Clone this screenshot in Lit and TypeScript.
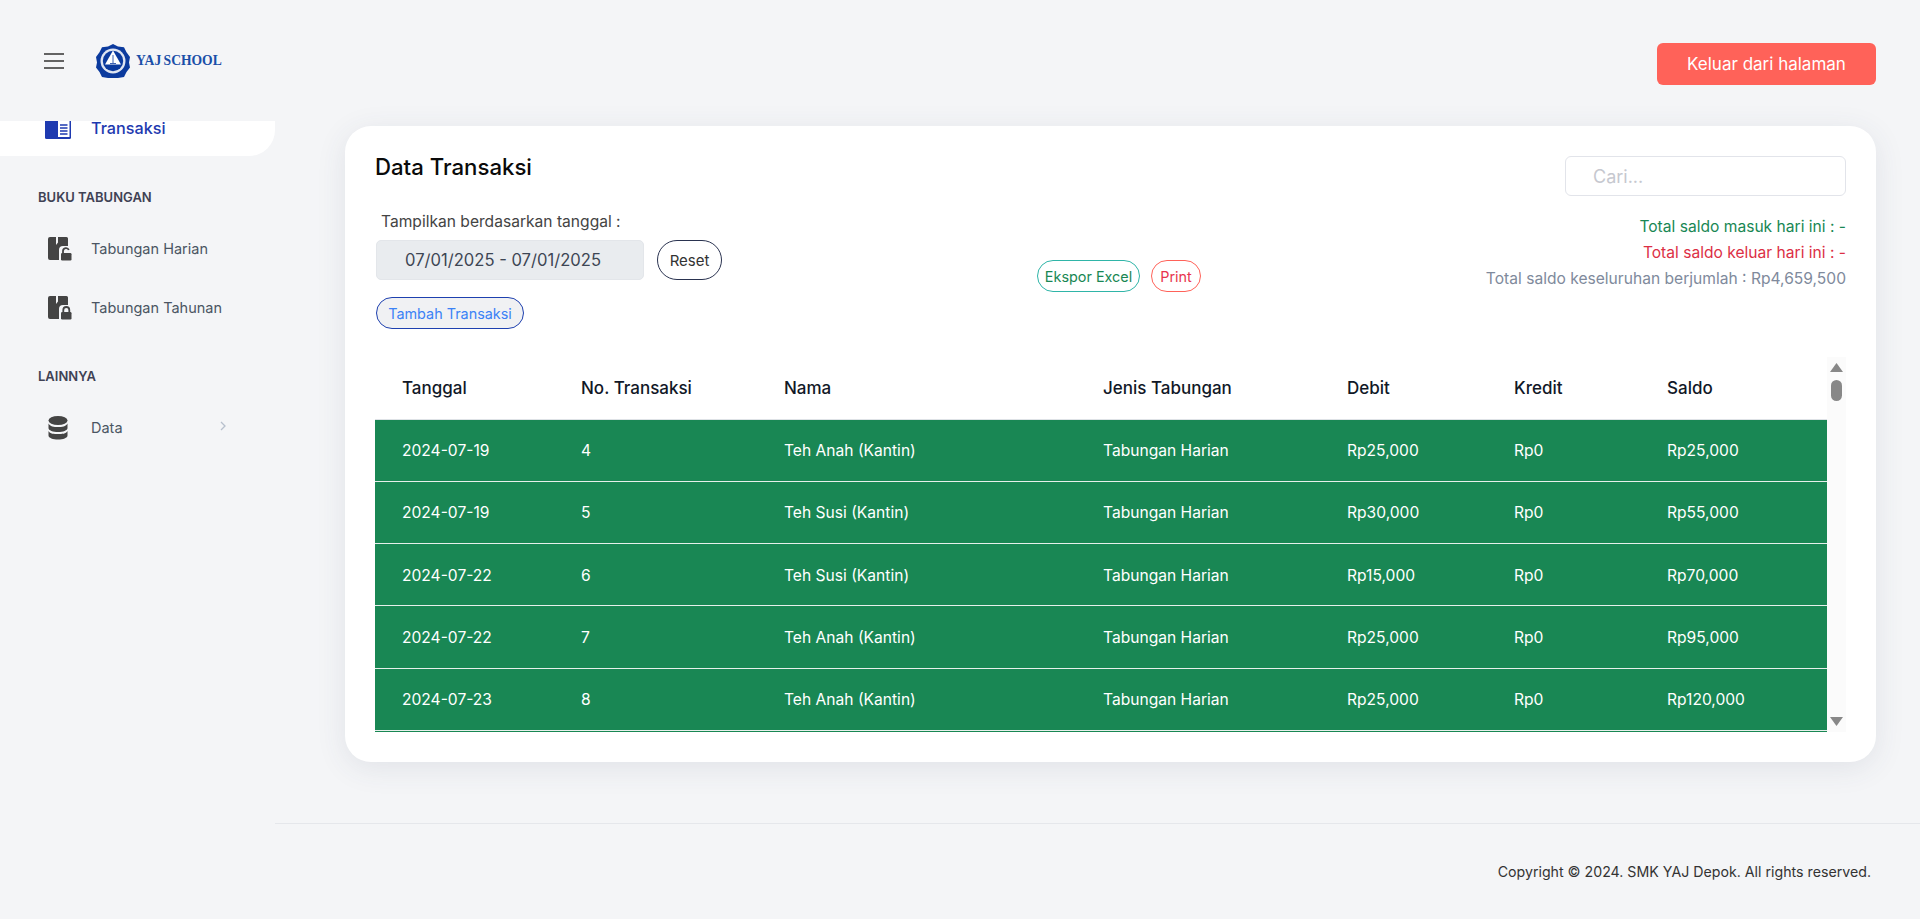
import { LitElement, css, html, svg } from 'lit'
import { customElement, state } from 'lit/decorators.js'

type Row = { date: string; no: string; name: string; debit: string; saldo: string }

const rows: Row[] = [
  { date: '2024-07-19', no: '4', name: 'Teh Anah (Kantin)', debit: 'Rp25,000', saldo: 'Rp25,000' },
  { date: '2024-07-19', no: '5', name: 'Teh Susi (Kantin)', debit: 'Rp30,000', saldo: 'Rp55,000' },
  { date: '2024-07-22', no: '6', name: 'Teh Susi (Kantin)', debit: 'Rp15,000', saldo: 'Rp70,000' },
  { date: '2024-07-22', no: '7', name: 'Teh Anah (Kantin)', debit: 'Rp25,000', saldo: 'Rp95,000' },
  { date: '2024-07-23', no: '8', name: 'Teh Anah (Kantin)', debit: 'Rp25,000', saldo: 'Rp120,000' },
]

const bookShape = svg`<path d="M2 0H8V8L10 5.500V0H18.500A1.500 1.500 0 0 1 20 1.500V9H15A4 4 0 0 0 11 13V23H2A2 2 0 0 1 0 21V2A2 2 0 0 1 2 0Z" fill="#444"/>`

const lockOpen = html`<svg class="ico" viewBox="0 0 24 24">
  ${bookShape}
  <path d="M15 16.500v-2.500a3 3 0 0 1 5.800-1" fill="none" stroke="#444" stroke-width="1.800"/>
  <rect x="13" y="16" width="10.500" height="7.500" rx="1.200" fill="#444"/>
</svg>`

const lockClosed = html`<svg class="ico" viewBox="0 0 24 24">
  ${bookShape}
  <path d="M15.300 16.500v-2.500a3 3 0 0 1 6 0v2.500" fill="none" stroke="#444" stroke-width="1.800"/>
  <rect x="13" y="16" width="10.500" height="7.500" rx="1.200" fill="#444"/>
</svg>`

@customElement('app-root')
export class AppRoot extends LitElement {
  @state()
  keyword = ''

  render() {
    return html`
      <header class="top">
        <div class="brand">
          <svg class="burger" viewBox="0 0 20 16">
            <path d="M0 1h20M0 8h20M0 15h20" stroke="#333" stroke-width="1.600"/>
          </svg>
          <svg class="seal" viewBox="0 0 34 34">
            <path d="M17 0l5 2.500 6 .8 2.500 5 3.500 4.700-1 5.500 1 5-3.500 4.500-2.500 5-6 1-5 2.500-5-2.500-6-1-2.500-5L0 23.500l1-5-1-5.500 3.500-4.700L6 3.300l6-.8z" fill="#0b3a9e"/>
            <circle cx="17" cy="17" r="12.500" fill="#dfe5f2"/>
            <circle cx="17" cy="17" r="10.200" fill="#0b3a9e"/>
            <path d="M17 6.500l8 14h-16z" fill="#fff"/>
            <path d="M17 11v8M14 19.500h6" stroke="#0b3a9e" stroke-width=".8"/>
          </svg>
          <span class="wordmark">YAJ SCHOOL</span>
        </div>
        <button class="logout">Keluar dari halaman</button>
      </header>

      <aside class="side">
        <a class="item active">
          <svg class="ico book" viewBox="0 6 26 18">
            <rect width="26" height="24" rx="1.500" fill="#1e3ab0"/>
            <rect x="13" y="2" width="11.500" height="20" fill="#fff"/>
            <path d="M15 10h7.500M15 13h7.500M15 16h7.500M15 19h7.500" stroke="#1e3ab0" stroke-width="1.400"/>
          </svg>
          <span>Transaksi</span>
        </a>
        <h6>BUKU TABUNGAN</h6>
        <a class="item">${lockOpen}<span>Tabungan Harian</span></a>
        <a class="item">${lockClosed}<span>Tabungan Tahunan</span></a>
        <h6 class="second">LAINNYA</h6>
        <a class="item">
          <svg class="ico" viewBox="0 0 24 24">
            <ellipse cx="10" cy="4.500" rx="9.500" ry="4.500" fill="#444"/>
            <path d="M.5 7.500C2 10.500 6 11 10 11s8-.5 9.500-3.500V12c0 2.500-4.500 4-9.500 4S.5 14.500.5 12z" fill="#444"/>
            <path d="M.5 15C2 18 6 18 10 18s8 0 9.500-3v4.500c0 2.500-4.500 4-9.500 4s-9.500-1.500-9.500-4z" fill="#444"/>
          </svg>
          <span>Data</span>
          <svg class="chev" viewBox="0 0 6 10"><path d="M1 1l4 4-4 4" fill="none" stroke="#b7c0cd" stroke-width="1.300"/></svg>
        </a>
      </aside>

      <main class="main">
        <section class="card">
          <div class="toolbar">
            <div class="left">
              <h2>Data Transaksi</h2>
              <label>Tampilkan berdasarkan tanggal :</label>
              <div class="dates">
                <div class="range">07/01/2025 - 07/01/2025</div>
                <button class="pill reset">Reset</button>
              </div>
              <button class="pill add">Tambah Transaksi</button>
            </div>
            <div class="mid">
              <button class="pill excel">Ekspor Excel</button>
              <button class="pill print">Print</button>
            </div>
            <div class="right">
              <input class="search" placeholder="Cari..." .value=${this.keyword} />
              <div class="stats">
                <p class="in">Total saldo masuk hari ini : -</p>
                <p class="out">Total saldo keluar hari ini : -</p>
                <p>Total saldo keseluruhan berjumlah : Rp4,659,500</p>
              </div>
            </div>
          </div>

          <div class="tablebox">
            <div class="clip">
              <table>
                <thead>
                  <tr>
                    <th>Tanggal</th>
                    <th>No. Transaksi</th>
                    <th>Nama</th>
                    <th>Jenis Tabungan</th>
                    <th>Debit</th>
                    <th>Kredit</th>
                    <th>Saldo</th>
                  </tr>
                </thead>
                <tbody>
                  ${rows.map(r => html`
                    <tr>
                      <td>${r.date}</td>
                      <td>${r.no}</td>
                      <td>${r.name}</td>
                      <td>Tabungan Harian</td>
                      <td>${r.debit}</td>
                      <td>Rp0</td>
                      <td>${r.saldo}</td>
                    </tr>
                  `)}
                  <tr><td colspan="7"></td></tr>
                </tbody>
              </table>
            </div>
            <div class="scroll">
              <svg class="arrow" viewBox="0 0 13 9"><path d="M6.500 0L13 9H0z" fill="#888"/></svg>
              <div class="thumb"></div>
              <svg class="arrow down" viewBox="0 0 13 9"><path d="M0 0h13L6.500 9z" fill="#888"/></svg>
            </div>
          </div>
        </section>
        <footer class="foot">Copyright © 2024. SMK YAJ Depok. All rights reserved.</footer>
      </main>
    `
  }

  static styles = css`
    :host {
      display: grid;
      grid-template-columns: 275px 1fr;
      grid-template-rows: 121px 798px;
      width: 100%;
      height: 919px;
      overflow: hidden;
      background: #f4f5f7;
      font-family: Inter, "Noto Sans", sans-serif;
      font-size: 15.600px;
      color: #444;
    }

    * {
      box-sizing: border-box;
    }

    .top {
      grid-column: 1 / 3;
      display: flex;
      align-items: flex-start;
      justify-content: space-between;
      padding: 43px 44px 0;
    }
    .brand {
      display: flex;
      align-items: center;
      height: 34px;
      margin-top: 1px;
    }
    .burger {
      width: 20px;
      height: 16px;
      margin-right: 32px;
    }
    .seal {
      width: 34px;
      height: 34px;
      margin-right: 6px;
    }
    .wordmark {
      font-family: "Liberation Serif", serif;
      font-weight: 700;
      font-size: 13.600px;
      word-spacing: -1px;
      color: #1a4fa8;
    }
    .logout {
      width: 219px;
      height: 42px;
      border: 0;
      border-radius: 6px;
      background: #ff6259;
      color: #fff;
      font: 400 17px Inter, sans-serif;
    }

    .side {
      display: flex;
      flex-direction: column;
    }
    .item {
      display: flex;
      align-items: center;
      height: 59px;
      padding-left: 48px;
      color: #4b5563;
      font-size: 14.500px;
    }
    .item .ico {
      width: 24px;
      height: 24px;
      margin-right: 19px;
      flex: none;
    }
    .item.active {
      height: 35px;
      padding-left: 45px;
      align-items: flex-start;
      background: #fff;
      border-bottom-right-radius: 26px;
      color: #1e3ab0;
      font-weight: 500;
      font-size: 16.200px;
    }
    .item.active span {
      line-height: 15px;
    }
    .item.active .book {
      width: 26px;
      height: 18px;
      margin-right: 20px;
    }
    h6 {
      margin: 33px 0 14px 38px;
      height: 16px;
      line-height: 16px;
      font-size: 13px;
      font-weight: 600;
      color: #3f4254;
    }
    h6.second {
      margin-top: 31px;
      margin-bottom: 14px;
    }
    .chev {
      width: 6px;
      height: 10px;
      margin-left: 97px;
      margin-top: -4px;
    }

    .main {
      display: flex;
      flex-direction: column;
      min-width: 0;
    }
    .card {
      height: 636px;
      margin: 5px 44px 0 70px;
      padding: 29px 30px 30px;
      background: #fff;
      border-radius: 26px;
      box-shadow: 0 6px 30px rgba(60, 70, 100, 0.1);
    }
    .toolbar {
      display: grid;
      grid-template-columns: 662px auto 1fr;
      height: 202px;
    }
    h2 {
      margin: 0;
      height: 24px;
      line-height: 24px;
      font-size: 22.200px;
      font-weight: 500;
      color: #0a0a0a;
    }
    label {
      display: block;
      margin: 34px 0 0 6px;
      line-height: 18px;
      color: #444;
    }
    .dates {
      display: flex;
      align-items: center;
      gap: 13px;
      margin: 9px 0 0 1px;
    }
    .range {
      width: 268px;
      height: 40px;
      padding-left: 28px;
      line-height: 38px;
      border-radius: 5px;
      background: #e9ecef;
      border: 1px solid #e3e6ea;
      font-size: 16.600px;
      color: #3d4654;
    }
    .pill {
      height: 32px;
      padding: 0;
      border-radius: 20px;
      background: #fff;
      font: 400 14.400px Inter, sans-serif;
    }
    .reset {
      width: 65px;
      height: 40px;
      border: 1px solid #2a3350;
      color: #333;
      font-size: 15px;
    }
    .add {
      width: 148px;
      margin: 17px 0 0 1px;
      border: 1px solid #1e40af;
      background: #f0f1f3;
      color: #3b82f6;
    }
    .mid {
      display: flex;
      gap: 11px;
      padding-top: 105px;
    }
    .excel {
      width: 103px;
      border: 1px solid #2fb5a8;
      color: #198754;
    }
    .print {
      width: 50px;
      border: 1px solid #ff6259;
      color: #e8344e;
    }
    .right {
      display: flex;
      flex-direction: column;
      align-items: flex-end;
      padding-top: 1px;
    }
    .search {
      width: 281px;
      height: 40px;
      padding: 0 0 0 27px;
      border: 1px solid #e2e4ea;
      border-radius: 6px;
      outline: 0;
      font: 400 18px Inter, sans-serif;
    }
    .search::placeholder {
      color: #c6c8cf;
    }
    .stats {
      margin-top: 18px;
      text-align: right;
      color: #808a9c;
    }
    .stats p {
      margin: 0;
      line-height: 26px;
    }
    .stats .in {
      color: #198754;
    }
    .stats .out {
      color: #dc2f45;
    }

    .tablebox {
      display: flex;
      height: 375px;
    }
    .clip {
      width: 1452px;
      overflow: hidden;
    }
    table {
      width: 1452px;
      table-layout: fixed;
      border-collapse: collapse;
    }
    th {
      height: 62px;
      padding: 0 0 0 27px;
      text-align: left;
      font-size: 17px;
      font-weight: 500;
      color: #111827;
    }
    th:nth-child(1) { width: 179px; }
    th:nth-child(2) { width: 203px; }
    th:nth-child(3) { width: 319px; }
    th:nth-child(4) { width: 244px; }
    th:nth-child(5) { width: 167px; }
    th:nth-child(6) { width: 153px; }
    thead tr {
      border-bottom: 1px solid #dee2e6;
    }
    td {
      height: 62.250px;
      padding: 1px 0 0 27px;
      background: #198754;
      border-bottom: 1px solid #e6f0eb;
      color: #fff;
      font-size: 15.600px;
    }
    .scroll {
      display: flex;
      flex-direction: column;
      align-items: center;
      width: 19px;
      padding-top: 6px;
      background: #fbfbfb;
    }
    .arrow {
      width: 13px;
      height: 9px;
      flex: none;
    }
    .arrow.down {
      margin-top: auto;
      margin-bottom: 6px;
    }
    .thumb {
      width: 11px;
      height: 21px;
      margin-top: 8px;
      border-radius: 6px;
      background: #888;
    }

    .foot {
      height: 96px;
      margin-top: 61px;
      padding: 38px 49px 0 0;
      border-top: 1px solid #e5e7eb;
      line-height: 20px;
      text-align: right;
      font-size: 14.200px;
      color: #333;
    }
  `
}

declare global {
  interface HTMLElementTagNameMap {
    'app-root': AppRoot
  }
}
